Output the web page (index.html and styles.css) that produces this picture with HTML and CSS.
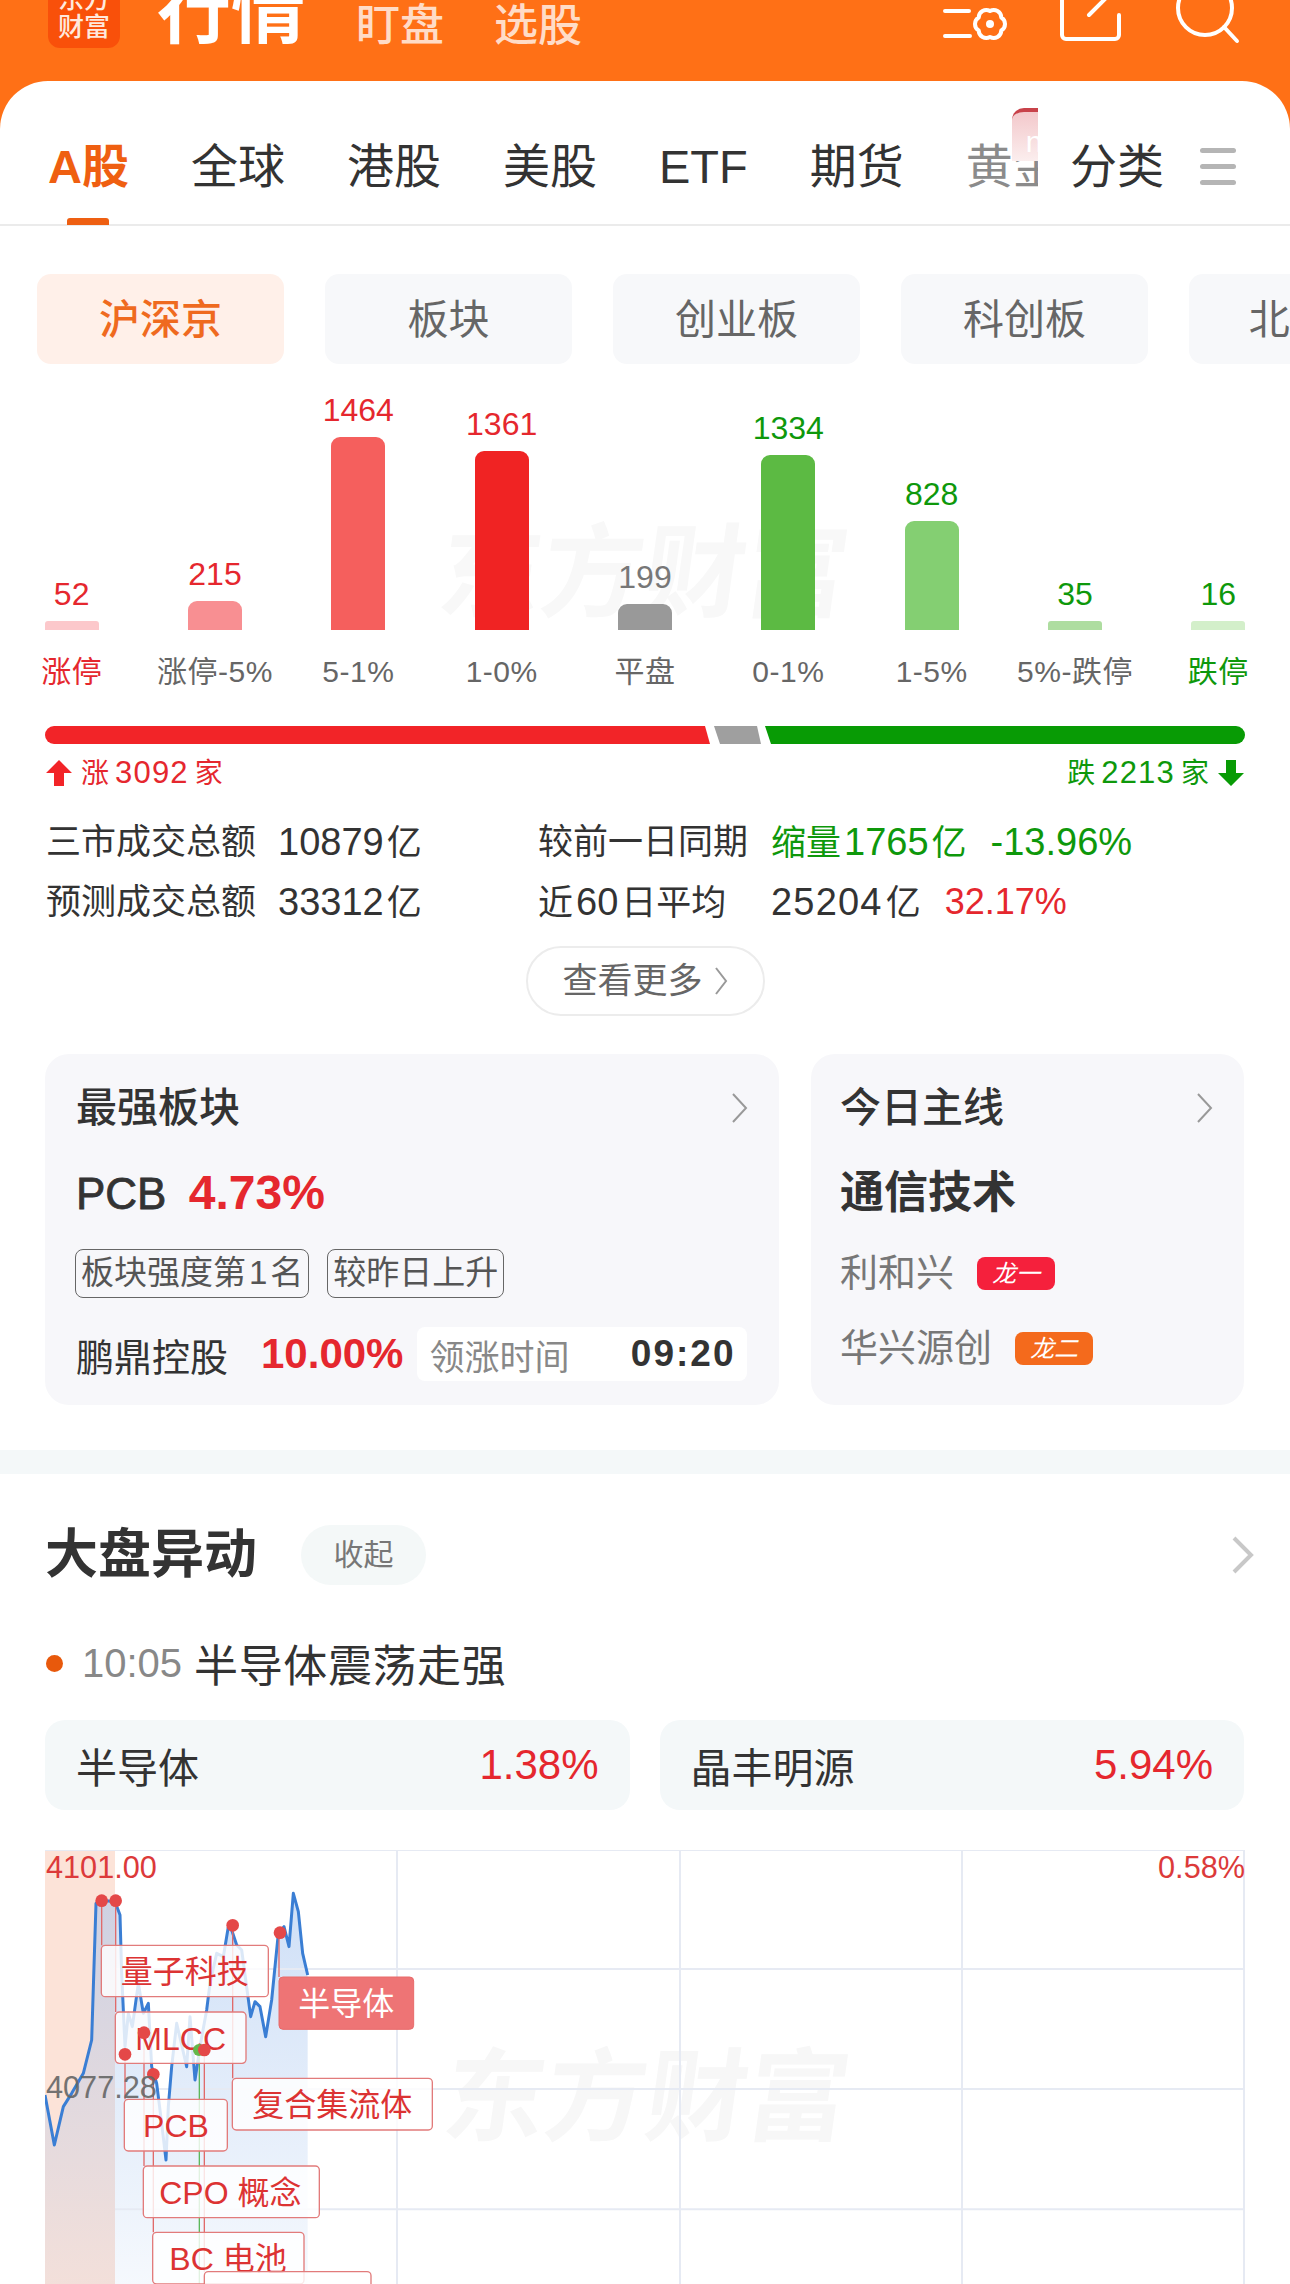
FILE: index.html
```html
<!DOCTYPE html>
<html lang="zh-CN">
<head>
  <meta charset="UTF-8">
  <meta name="viewport" content="width=device-width, initial-scale=1.0">
  <title>行情</title>
  <link rel="stylesheet" href="styles.css">
</head>
<body>
  <div class="page">
    <header class="top">
      <div class="head">
        <div class="logo"><span>东方</span><span>财富</span></div>
        <div class="head-title">行情</div>
        <div class="head-link">盯盘</div>
        <div class="head-link">选股</div>
        <svg class="head-icons" width="293" height="48" viewBox="945 0 293 48">
          <g class="ico">
            <path d="M945 11H969M945 36H970"/>
            <path transform="translate(990 24)" d="M0 -13A7.5 7.5 0 0 1 11.26 -6.5A7.5 7.5 0 0 1 11.26 6.5A7.5 7.5 0 0 1 0 13A7.5 7.5 0 0 1 -11.26 6.5A7.5 7.5 0 0 1 -11.26 -6.5A7.5 7.5 0 0 1 0 -13Z"/>
            <path d="M1119 15V35a4 4 0 0 1 -4 4H1066a4 4 0 0 1 -4 -4V-10"/>
            <path d="M1089 15L1120 -16"/>
            <circle cx="1205" cy="8" r="27"/>
            <path d="M1224 27L1237 41"/>
          </g>
          <circle class="ico-dot" cx="990" cy="24" r="4"/>
        </svg>
      </div>
    </header>

    <main class="panel">
      <nav class="tabs">
        <div class="tab-scroll">
          <span class="tab active">A股</span>
          <span class="tab">全球</span>
          <span class="tab">港股</span>
          <span class="tab">美股</span>
          <span class="tab">ETF</span>
          <span class="tab">期货</span>
          <span class="tab gold">黄金<span class="new-badge">new</span></span>
        </div>
        <span class="tab">分类</span>
        <span class="menu"><i></i><i></i><i></i></span>
      </nav>

      <div class="pills">
        <div class="pill active">沪深京</div>
        <div class="pill">板块</div>
        <div class="pill">创业板</div>
        <div class="pill">科创板</div>
        <div class="pill">北证50</div>
      </div>

      <section class="dist">
        <div class="watermark">东方财富</div>
        <div class="col"><span class="val up">52</span><span class="bar c1" style="height:9px"></span><span class="lab up">涨停</span></div>
        <div class="col"><span class="val up">215</span><span class="bar c2" style="height:29px"></span><span class="lab">涨停-5%</span></div>
        <div class="col"><span class="val up">1464</span><span class="bar c3" style="height:193px"></span><span class="lab">5-1%</span></div>
        <div class="col"><span class="val up">1361</span><span class="bar c4" style="height:179px"></span><span class="lab">1-0%</span></div>
        <div class="col"><span class="val flat">199</span><span class="bar c5" style="height:26px"></span><span class="lab">平盘</span></div>
        <div class="col"><span class="val down">1334</span><span class="bar c6" style="height:175px"></span><span class="lab">0-1%</span></div>
        <div class="col"><span class="val down">828</span><span class="bar c7" style="height:109px"></span><span class="lab">1-5%</span></div>
        <div class="col"><span class="val down">35</span><span class="bar c8" style="height:9px"></span><span class="lab">5%-跌停</span></div>
        <div class="col"><span class="val down">16</span><span class="bar c9" style="height:9px"></span><span class="lab down">跌停</span></div>
      </section>

      <svg class="ratio" width="1200" height="18" viewBox="0 0 1200 18">
        <path fill="#f22428" d="M9 0H660L665 18H9A9 9 0 0 1 9 0Z"/>
        <path fill="#9f9f9f" d="M669 0H712L716 18H675Z"/>
        <path fill="#089b05" d="M720 0H1191A9 9 0 0 1 1191 18H726Z"/>
      </svg>

      <div class="counts">
        <span class="count up">
          <svg width="26" height="26" viewBox="0 0 26 26"><path fill="#f22428" d="M13 0L26 13H18V26H8V13H0Z"/></svg>
          <span>涨<b class="c-n">3092</b>家</span>
        </span>
        <span class="count down">
          <span>跌<b class="c-n">2213</b>家</span>
          <svg width="26" height="26" viewBox="0 0 26 26"><path fill="#089b05" d="M8 0H18V13H26L13 26L0 13H8Z"/></svg>
        </span>
      </div>

      <div class="stats">
        <span>三市成交总额</span><span><b class="n">10879</b>亿</span><span>较前一日同期</span>
        <span class="last down"><span>缩量<b class="n n-l">1765</b>亿</span><b class="n">-13.96%</b></span>
        <span>预测成交总额</span><span><b class="n">33312</b>亿</span><span>近<b class="n n-l">60</b>日平均</span>
        <span class="last"><span><b class="n n-w">25204</b>亿</span><b class="n n-s up">32.17%</b></span>
      </div>

      <div class="more-wrap">
        <div class="more">查看更多
          <svg width="14" height="30" viewBox="0 0 14 30"><path class="chev" d="M2 2L12 15L2 28"/></svg>
        </div>
      </div>

      <div class="cards">
        <div class="card card-l">
          <div class="card-title">最强板块
            <svg width="17" height="30" viewBox="0 0 17 30"><path class="chev" d="M2 1L15 15L2 29"/></svg>
          </div>
          <div class="card-val">PCB <b class="up">4.73%</b></div>
          <div class="tags"><span class="tag">板块强度第<b class="tag-n">1</b>名</span><span class="tag">较昨日上升</span></div>
          <div class="lead">
            <span class="lead-name">鹏鼎控股</span>
            <b class="lead-pct up">10.00%</b>
            <span class="lead-time"><span>领涨时间</span><b>09:20</b></span>
          </div>
        </div>
        <div class="card card-r">
          <div class="card-title">今日主线
            <svg width="17" height="30" viewBox="0 0 17 30"><path class="chev" d="M2 1L15 15L2 29"/></svg>
          </div>
          <div class="card-val cjk">通信技术</div>
          <div class="stock">利和兴<span class="dragon red">龙一</span></div>
          <div class="stock">华兴源创<span class="dragon orange">龙二</span></div>
        </div>
      </div>

      <div class="band"></div>

      <div class="sec-head">
        <h2>大盘异动</h2>
        <span class="fold">收起</span>
        <svg width="22" height="38" viewBox="0 0 22 38"><path class="chev chev-lg" d="M2 2L19 19L2 36"/></svg>
      </div>

      <div class="news"><i class="dot"></i><span class="news-time">10:05</span><span class="news-text">半导体震荡走强</span></div>

      <div class="movers">
        <div class="mover"><span>半导体</span><span class="up mover-n">1.38%</span></div>
        <div class="mover"><span>晶丰明源</span><span class="up mover-n">5.94%</span></div>
      </div>

      <svg class="chart" width="1200" height="434" viewBox="135 30 3600 1302">
        <defs>
          <linearGradient id="areaFill" x1="0" y1="0" x2="0" y2="1">
            <stop offset="0" stop-color="#9fc0ee" stop-opacity=".5"/>
            <stop offset="1" stop-color="#9fc0ee" stop-opacity=".1"/>
          </linearGradient>
        </defs>
        <rect class="pre" x="135" y="30" width="210" height="1302"/>
        <text class="mark" x="1320" y="880" transform="skewX(-8) translate(124 0)">东方财富</text>
        <path fill="url(#areaFill)" d="M135 765L163 915L190 800L215 760L250 700L275 600L288 190L300 180L345 185L360 225L365 400L375 620L385 520L397 560L415 430L430 520L445 490L455 680L470 730L485 850L498 960L505 800L515 680L530 550L560 680L570 530L585 720L600 620L620 510L630 430L650 340L670 350L685 260L695 270L710 315L725 330L752 530L765 485L780 500L797 590L815 480L835 280L852 260L867 320L880 160L895 215L908 340L923 405L923 1332L135 1332Z"/>
        <path class="grid" d="M135 30H3735M345 387H3735M345 747H3735M345 1108H3735M1191 30V1332M2040 30V1332M2886 30V1332M3732 30V1332"/>
        <path class="line" d="M135 765L163 915L190 800L215 760L250 700L275 600L288 190L300 180L345 185L360 225L365 400L375 620L385 520L397 560L415 430L430 520L445 490L455 680L470 730L485 850L498 960L505 800L515 680L530 550L560 680L570 530L585 720L600 620L620 510L630 430L650 340L670 350L685 260L695 270L710 315L725 330L752 530L765 485L780 500L797 590L815 480L835 280L852 260L867 320L880 160L895 215L908 340L923 405"/>
        <path class="stem" d="M305 182V316M347 182V516M375 643V778M432 578V978M460 703V1177M613 630V1295M698 256V715M837 278V411"/>
        <path class="stem-g" d="M598 630V1332"/>
        <text class="axis up-fill" x="138" y="115">4101.00</text>
        <text class="axis up-fill end" x="3735" y="115">0.58%</text>

        <rect class="tip" x="304" y="316" width="501" height="154" rx="12"/>
        <text class="tip-t" x="554" y="429">量子科技</text>
        <rect class="tip" x="346" y="516" width="392" height="154" rx="12"/>
        <text class="tip-t" x="542" y="629">MLCC</text>
        <rect class="tip" x="373" y="778" width="309" height="155" rx="12"/>
        <text class="tip-t" x="528" y="891">PCB</text>
        <rect class="tip" x="430" y="978" width="528" height="155" rx="12"/>
        <text class="tip-t" x="691" y="1091">CPO 概念</text>
        <rect class="tip" x="458" y="1177" width="454" height="155" rx="12"/>
        <text class="tip-t" x="684" y="1290">BC 电池</text>
        <rect class="tip" x="613" y="1295" width="500" height="155" rx="12"/>
        <rect class="tip" x="697" y="715" width="600" height="155" rx="12"/>
        <text class="tip-t" x="997" y="828">复合集流体</text>
        <rect class="tip-on" x="837" y="411" width="404" height="157" rx="12"/>
        <text class="tip-t tip-w" x="1039" y="525">半导体</text>

        <circle class="pt-g" cx="597" cy="630" r="18"/>
        <g class="pts">
          <circle cx="305" cy="182" r="19"/>
          <circle cx="347" cy="182" r="19"/>
          <circle cx="698" cy="256" r="19"/>
          <circle cx="840" cy="278" r="19"/>
          <circle cx="432" cy="578" r="19"/>
          <circle cx="375" cy="643" r="19"/>
          <circle cx="460" cy="703" r="19"/>
          <circle cx="613" cy="630" r="19"/>
        </g>
        <text class="axis flat-fill" x="138" y="775">4077.28</text>
      </svg>
    </main>
  </div>
</body>
</html>
```

FILE: styles.css
```css
* {
  box-sizing: border-box;
}
html, body {
  margin: 0;
  height: 2284px;
  overflow: hidden;
}
body {
  font-family: "Liberation Sans", "Noto Sans CJK SC", sans-serif;
  color: #333;
  background: #fff;
}
.page {
  width: 1290px;
  height: 2284px;
  overflow: hidden;
}
.up { color: #e5272e; }
.down { color: #0e980b; }
.flat { color: #777; }

/* orange header, tops of the items run off the screen */
.top {
  height: 131px;
  background: #ff7016;
}
.head {
  height: 48px;
  display: flex;
  align-items: flex-end;
  color: #fff;
}
.logo {
  flex: none;
  width: 72px;
  height: 90px;
  margin-left: 48px;
  padding-bottom: 7px;
  display: flex;
  flex-direction: column;
  justify-content: flex-end;
  border-radius: 12px;
  background: #f9500a;
  font-size: 26px;
  line-height: 28px;
  font-weight: 500;
  text-align: center;
  color: #ffe9dd;
}
.logo span {
  display: block;
}
.head-title {
  margin-left: 37px;
  font-size: 74px;
  line-height: 72px;
  font-weight: 700;
}
.head-link {
  font-size: 44px;
  line-height: 44px;
  font-weight: 500;
  color: #ffdcc7;
  margin-left: 50px;
}
.head-title + .head-link {
  margin-left: 51px;
}
.head-icons {
  margin-left: auto;
  margin-right: 52px;
  flex: none;
  overflow: visible;
}
.ico {
  fill: none;
  stroke: #fff;
  stroke-width: 4;
  stroke-linecap: round;
  stroke-linejoin: round;
}
.ico-dot {
  fill: #fff;
}

.panel {
  height: 2204px;
  margin-top: -50px;
  border-radius: 48px 48px 0 0;
  background: #fff;
  overflow: hidden;
}

/* tabs */
.tabs {
  position: relative;
  height: 145px;
  padding: 59px 0 0 48px;
  display: flex;
  align-items: flex-start;
  border-bottom: 2px solid #ebebeb;
}
.tabs::after {
  content: "";
  position: absolute;
  left: 67px;
  bottom: -1px;
  width: 42px;
  height: 7px;
  border-radius: 3px 3px 0 0;
  background: #ee5f12;
}
.tab-scroll {
  position: relative;
  flex: none;
  width: 990px;
  height: 142px;
  display: flex;
  align-items: flex-start;
  gap: 62px;
  overflow: hidden;
  margin-top: -59px;
  padding-top: 59px;
}
.tab-scroll::after {
  content: "";
  position: absolute;
  right: 0;
  top: 109px;
  height: 32px;
  width: 60px;
  background: linear-gradient(90deg, rgba(255,255,255,0), rgba(255,255,255,.8));
}
.tab {
  flex: none;
  font-size: 47px;
  line-height: 54px;
  color: #333;
}
.tab-scroll + .tab {
  margin-left: 32px;
}
.tab.active {
  color: #ef5f11;
  font-weight: 700;
}
.tab.gold {
  position: relative;
  color: #8b8b8b;
}
.new-badge {
  position: absolute;
  left: 46px;
  top: -32px;
  width: 70px;
  height: 53px;
  padding-left: 14px;
  border-top: 4px solid #c8424a;
  border-radius: 12px 12px 0 0;
  background: linear-gradient(#f3c8cb, #fbeeee);
  font-size: 30px;
  line-height: 60px;
  color: #fff;
}
.menu {
  margin: 8px 0 0 36px;
  width: 36px;
  display: flex;
  flex-direction: column;
  gap: 11px;
}
.menu i {
  display: block;
  height: 5px;
  border-radius: 3px;
  background: #b5b5b5;
}

/* sub tabs */
.pills {
  display: flex;
  gap: 41px;
  margin-top: 48px;
  padding-left: 37px;
  overflow: hidden;
}
.pill {
  flex: none;
  width: 247px;
  height: 90px;
  border-radius: 14px;
  background: #f7f8fa;
  font-size: 41px;
  line-height: 92px;
  text-align: center;
  color: #666;
}
.pill.active {
  background: #fff0e9;
  color: #ef6a1f;
  font-weight: 500;
}

/* up/down distribution */
.dist {
  position: relative;
  height: 324px;
  display: grid;
  grid-template-columns: repeat(9, 1fr);
  align-items: end;
  padding-bottom: 58px;
}
.watermark {
  position: absolute;
  left: 440px;
  top: 150px;
  font-size: 102px;
  line-height: 120px;
  font-weight: 700;
  transform: skewX(-8deg);
  color: #f8f8f8;
  white-space: nowrap;
}
.col {
  position: relative;
  display: flex;
  flex-direction: column;
  align-items: center;
}
.val {
  font-size: 32px;
  line-height: 32px;
  margin-bottom: 11px;
}
.bar {
  width: 54px;
  border-radius: 9px 9px 0 0;
}
.c1 { background: #fcc8cb; border-radius: 3px 3px 0 0; }
.c2 { background: #f88f92; }
.c3 { background: #f55f5d; }
.c4 { background: #f02323; }
.c5 { background: #999; }
.c6 { background: #5cba43; }
.c7 { background: #84cf72; }
.c8 { background: #aedda0; border-radius: 3px 3px 0 0; }
.c9 { background: #d3efca; border-radius: 3px 3px 0 0; }
.lab {
  position: absolute;
  top: 100%;
  margin-top: 26px;
  font-size: 30px;
  line-height: 32px;
  letter-spacing: .5px;
  white-space: nowrap;
  color: #666;
}
.lab.up { color: #e5272e; }
.lab.down { color: #0e980b; }

.ratio {
  display: block;
  margin: 38px 0 0 45px;
}
.counts {
  display: flex;
  justify-content: space-between;
  height: 36px;
  margin-top: 11px;
  padding: 0 46px;
}
.count {
  display: flex;
  align-items: center;
  gap: 9px;
  font-size: 28px;
  line-height: 36px;
}
.c-n {
  font-weight: 400;
  font-size: 31px;
  margin: 0 6px;
  letter-spacing: 1.2px;
}

/* turnover figures */
.stats {
  display: grid;
  grid-template-columns: 232px 260px 233px auto;
  grid-auto-rows: 60px;
  margin-top: 21px;
  padding-left: 46px;
  font-size: 35px;
  line-height: 60px;
  color: #333;
}
.n {
  font-weight: 400;
  font-size: 38px;
  margin-right: 3px;
}
.n-l {
  margin-left: 3px;
  margin-right: 3px;
}
.n-w {
  letter-spacing: 1.2px;
}
.n-s {
  font-size: 36px;
}
.last {
  display: flex;
  gap: 24px;
}
.more-wrap {
  display: flex;
  justify-content: center;
  margin-top: 14px;
}
.more {
  width: 239px;
  height: 70px;
  display: flex;
  align-items: center;
  justify-content: center;
  gap: 11px;
  border: 2px solid #ececec;
  border-radius: 35px;
  font-size: 35px;
  line-height: 66px;
  color: #666;
}
.chev {
  fill: none;
  stroke: #999;
  stroke-width: 2;
}
.chev-lg {
  stroke: #c8c8c8;
  stroke-width: 4;
}

/* cards */
.cards {
  display: flex;
  gap: 32px;
  margin-top: 38px;
  padding: 0 46px 0 45px;
}
.card {
  height: 351px;
  padding: 30px 31px 0;
  border-radius: 24px;
  background: #f7f7fa;
}
.card-l { flex: none; width: 734px; }
.card-r { flex: 1; padding-left: 29px; }
.card-title {
  display: flex;
  justify-content: space-between;
  align-items: center;
  font-size: 41px;
  line-height: 48px;
  font-weight: 500;
}
.card-val {
  margin-top: 31px;
  height: 60px;
  font-size: 44px;
  line-height: 60px;
  font-weight: 500;
  -webkit-text-stroke: .8px #333;
}
.card-val b {
  margin-left: 10px;
  font-size: 48px;
  -webkit-text-stroke: 0;
}
.card-val.cjk {
  font-weight: 700;
  -webkit-text-stroke: 0;
}
.tags {
  display: flex;
  gap: 18px;
  margin: 26px 0 0 -1px;
}
.tag {
  height: 49px;
  padding: 0 5px;
  border: 1.5px solid #666;
  border-radius: 8px;
  font-size: 33px;
  line-height: 46px;
  color: #555;
}
.tag-n {
  font-weight: 400;
  margin: 0 3px;
}
.lead {
  display: flex;
  align-items: center;
  margin-top: 29px;
  height: 54px;
  white-space: nowrap;
}
.lead-name {
  flex: none;
  font-size: 38px;
}
.lead-pct {
  flex: none;
  margin-left: 33px;
  font-size: 42px;
}
.lead-time {
  flex: none;
  width: 330px;
  height: 54px;
  margin-left: 14px;
  padding: 0 12px;
  display: flex;
  justify-content: space-between;
  align-items: center;
  border-radius: 8px;
  background: #fff;
  font-size: 35px;
  color: #888;
}
.lead-time b {
  font-size: 37px;
  letter-spacing: 2px;
  color: #333;
}
.stock {
  display: flex;
  align-items: center;
  gap: 23px;
  margin-top: 25px;
  font-size: 38px;
  line-height: 50px;
  color: #777;
}
.dragon {
  width: 78px;
  height: 33px;
  border-radius: 8px;
  font-size: 24px;
  line-height: 33px;
  font-style: italic;
  text-align: center;
  color: #fff;
}
.dragon.red { background: #f5203c; }
.dragon.orange { background: #f46a1c; }

.band {
  height: 24px;
  margin-top: 45px;
  background: #f4f8f9;
}

/* market moves */
.sec-head {
  display: flex;
  align-items: center;
  height: 60px;
  margin-top: 51px;
  padding-left: 45px;
}
.sec-head h2 {
  margin: 0;
  font-size: 53px;
  font-weight: 700;
  line-height: 60px;
}
.fold {
  width: 125px;
  height: 60px;
  margin-left: 44px;
  border-radius: 30px;
  background: #f4f8f8;
  font-size: 30px;
  line-height: 60px;
  text-align: center;
  color: #777;
}
.sec-head svg {
  margin-left: auto;
  margin-right: 36px;
}
.news {
  display: flex;
  align-items: center;
  height: 60px;
  margin-top: 48px;
  padding-left: 46px;
  font-size: 44px;
}
.news-text {
  letter-spacing: .6px;
}
.dot {
  width: 17px;
  height: 17px;
  border-radius: 50%;
  background: #e8590c;
}
.news-time {
  margin: 0 12px 0 19px;
  font-size: 40px;
  color: #888;
}
.movers {
  display: flex;
  gap: 30px;
  margin-top: 27px;
  padding: 0 46px 0 45px;
}
.mover {
  flex: 1;
  height: 90px;
  padding: 0 31px;
  display: flex;
  justify-content: space-between;
  align-items: center;
  border-radius: 20px;
  background: #f4f8f9;
  font-size: 41px;
}
.mover-n {
  font-size: 42px;
}
.chart {
  display: block;
  margin: 40px 0 0 45px;
  font-family: "Liberation Sans", "Noto Sans CJK SC", sans-serif;
}
.pre { fill: #fce3d8; }
.mark {
  font-size: 303px;
  font-weight: 700;
  fill: #f7f7f7;
}
.grid {
  fill: none;
  stroke: #e6eaf3;
  stroke-width: 6;
}
.line {
  fill: none;
  stroke: #3a7ed4;
  stroke-width: 9;
  stroke-linejoin: round;
}
.stem {
  fill: none;
  stroke: #e06a6a;
  stroke-width: 4;
}
.stem-g {
  fill: none;
  stroke: #5cb85c;
  stroke-width: 4;
}
.axis { font-size: 92px; }
.up-fill { fill: #dc3a3a; }
.flat-fill { fill: #666; opacity: .9; }
.end { text-anchor: end; }
.tip {
  fill: rgba(255,255,255,.82);
  stroke: #e27b7b;
  stroke-width: 4;
}
.tip-on {
  fill: #ee7475;
  stroke: #e86a6a;
  stroke-width: 3;
}
.tip-t {
  font-size: 96px;
  text-anchor: middle;
  fill: #dc3333;
}
.tip-w { fill: #fff; }
.pts { fill: #e44848; }
.pt-g { fill: #63b84a; }
```
